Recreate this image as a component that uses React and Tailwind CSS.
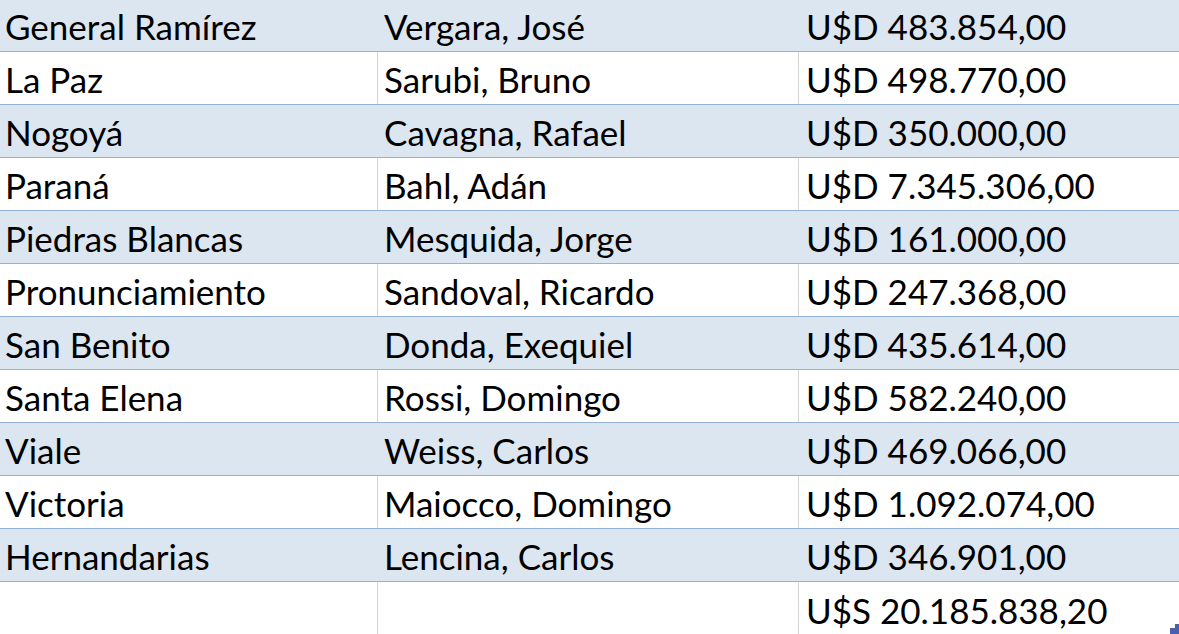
import React from 'react';

const rows = [
  ['General Ramírez', 'Vergara, José', 'U$D 483.854,00'],
  ['La Paz', 'Sarubi, Bruno', 'U$D 498.770,00'],
  ['Nogoyá', 'Cavagna, Rafael', 'U$D 350.000,00'],
  ['Paraná', 'Bahl, Adán', 'U$D 7.345.306,00'],
  ['Piedras Blancas', 'Mesquida, Jorge', 'U$D 161.000,00'],
  ['Pronunciamiento', 'Sandoval, Ricardo', 'U$D 247.368,00'],
  ['San Benito', 'Donda, Exequiel', 'U$D 435.614,00'],
  ['Santa Elena', 'Rossi, Domingo', 'U$D 582.240,00'],
  ['Viale', 'Weiss, Carlos', 'U$D 469.066,00'],
  ['Victoria', 'Maiocco, Domingo', 'U$D 1.092.074,00'],
  ['Hernandarias', 'Lencina, Carlos', 'U$D 346.901,00'],
  ['', '', 'U$S 20.185.838,20'],
];

const App = () => {
  return (
    <div
      className="relative w-[1179px] h-[634px] overflow-hidden bg-white text-black"
      style={{ fontFamily: 'Lato, "Open Sans", sans-serif' }}
    >
      {rows.map((r, i) => {
        const striped = i % 2 === 0;
        const last = i === rows.length - 1;
        return (
          <div
            key={i}
            className={`grid grid-cols-[378px_421px_1fr] text-[35px] leading-none ${
              i === 0 ? 'h-[52px]' : 'h-[53px]'
            } ${last ? '' : 'border-b border-[#95b3d7]'} ${
              striped ? 'bg-[#dce6f1]' : 'bg-white'
            }`}
          >
            <div
              className={`flex items-end pb-[7px] pl-[5px] whitespace-nowrap ${
                striped ? '' : 'border-r border-[#d4d4d4]'
              }`}
            >
              {r[0]}
            </div>
            <div
              className={`flex items-end pb-[7px] pl-[6px] whitespace-nowrap ${
                striped ? '' : 'border-r border-[#d4d4d4]'
              }`}
            >
              {r[1]}
            </div>
            <div className="flex items-end pb-[7px] pl-[7px] whitespace-nowrap">
              {r[2]}
            </div>
          </div>
        );
      })}

      {/* fill handle */}
      <div className="absolute right-0 bottom-[6px] w-[4px] h-[4px] bg-[#4a5fae]" />
      <div className="absolute right-0 bottom-0 w-[9px] h-[6px] bg-[#4a5fae]" />
    </div>
  );
};

export default App;
